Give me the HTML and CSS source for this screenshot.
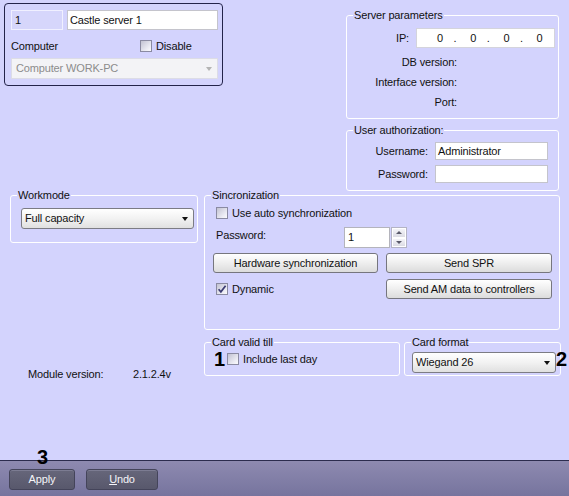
FILE: index.html
```html
<!DOCTYPE html>
<html>
<head>
<meta charset="utf-8">
<link rel="stylesheet" href="styles.css">
</head>
<body>
<div class="main">
  <div class="top">
    <div class="server-box">
      <div class="sb-row1">
        <div class="input id-input">1</div>
        <div class="input name-input">Castle server 1</div>
      </div>
      <div class="sb-row2">
        <span class="comp-label">Computer</span>
        <span class="cb"></span>
        <span class="cb-text">Disable</span>
      </div>
      <div class="select disabled comp-select">
        <span>Computer WORK-PC</span>
        <span class="arrow"></span>
      </div>
    </div>
    <div class="right-col">
      <div class="group grp-server">
        <span class="legend">Server parameters</span>
        <div class="ip-row">
          <span class="lbl">IP:</span>
          <div class="input ip-input">
            <span>0</span><span>.</span><span>0</span><span>.</span><span>0</span><span>.</span><span>0</span>
          </div>
        </div>
        <div class="info-rows">
          <div class="info-row">DB version:</div>
          <div class="info-row">Interface version:</div>
          <div class="info-row">Port:</div>
        </div>
      </div>
      <div class="group grp-auth">
        <span class="legend">User authorization:</span>
        <div class="auth-row">
          <span class="lbl">Username:</span>
          <div class="input auth-input">Administrator</div>
        </div>
        <div class="auth-row">
          <span class="lbl">Password:</span>
          <div class="input auth-input"></div>
        </div>
      </div>
    </div>
  </div>

  <div class="middle">
    <div class="group grp-workmode">
      <span class="legend">Workmode</span>
      <div class="select wm-select">
        <span>Full capacity</span>
        <span class="arrow"></span>
      </div>
    </div>
    <div class="group grp-sync">
      <span class="legend">Sincronization</span>
      <div class="sync-row1">
        <span class="cb"></span>
        <span class="cb-text">Use auto synchronization</span>
      </div>
      <div class="sync-row2">
        <span class="pw-label">Password:</span>
        <div class="input spin-input">1</div>
        <div class="spin">
          <span class="spin-btn"><span class="up"></span></span>
          <span class="spin-btn"><span class="down"></span></span>
        </div>
      </div>
      <div class="sync-row3">
        <div class="btn btn-hw">Hardware synchronization</div>
        <div class="btn btn-spr">Send SPR</div>
      </div>
      <div class="sync-row4">
        <div class="dyn-cell">
          <span class="cb checked"><svg width="10" height="10" viewBox="0 0 10 10"><path d="M1.6 5.2 L3.9 7.8 L8.6 1.8" fill="none" stroke="#3b3b73" stroke-width="1.7"/></svg></span>
          <span class="cb-text">Dynamic</span>
        </div>
        <div class="btn btn-spr">Send AM data to controllers</div>
      </div>
    </div>
  </div>

  <div class="bottom-row">
    <div class="modver">
      <span class="mv-label">Module version:</span><span>2.1.2.4v</span>
    </div>
    <div class="group grp-valid">
      <span class="legend">Card valid till</span>
      <div class="valid-row">
        <span class="mark mark-inline">1</span>
        <span class="cb"></span>
        <span class="cb-text">Include last day</span>
      </div>
    </div>
    <div class="group grp-format">
      <span class="legend">Card format</span>
      <div class="select fmt-select">
        <span>Wiegand 26</span>
        <span class="arrow"></span>
      </div>
      <span class="mark mark-2">2</span>
    </div>
  </div>
</div>
<div class="footer">
  <span class="mark mark-3">3</span>
  <div class="fbtn fbtn-apply">Apply</div>
  <div class="fbtn fbtn-undo"><u>U</u>ndo</div>
</div>
</body>
</html>
```
FILE: styles.css
```css
* { box-sizing: border-box; }
html, body {
  margin: 0;
  padding: 0;
  width: 569px;
  height: 496px;
  overflow: hidden;
}
body {
  background: #d3d3fd;
  font-family: "Liberation Sans", Arial, sans-serif;
  font-size: 11px;
  line-height: 13px;
  letter-spacing: -0.15px;
  color: #111;
}
.main {
  height: 460px;
  padding-top: 3px;
}
.top {
  display: flex;
  align-items: flex-start;
}
.server-box {
  margin-left: 4px;
  width: 219px;
  height: 83px;
  border: 1px solid #23234a;
  border-radius: 4px;
  padding: 6px 0 0 6px;
}
.input {
  background: #fff;
  border: 1px solid #c4c4cc;
  height: 20px;
  line-height: 18px;
  padding-left: 2px;
  white-space: nowrap;
}
.sb-row1 {
  display: flex;
}
.id-input {
  width: 52px;
  background: #d6d6fb;
  border: 1px solid #f0f0ff;
  padding-left: 3px;
}
.name-input {
  width: 151px;
  margin-left: 4px;
}
.sb-row2 {
  margin-top: 9px;
  height: 14px;
  display: flex;
  align-items: center;
}
.comp-label {
  width: 129px;
}
.cb {
  width: 12px;
  height: 12px;
  flex: none;
  border: 1px solid #8a8aa2;
  background: linear-gradient(135deg, #c2c2d2 0%, #ececf4 70%, #fafafc 100%);
  display: inline-flex;
  align-items: center;
  justify-content: center;
}
.cb-text {
  margin-left: 4px;
}
.select {
  display: flex;
  align-items: center;
  justify-content: space-between;
  height: 21px;
  border: 1px solid #7c7c84;
  border-radius: 3px;
  background: linear-gradient(#ffffff 0%, #f2f2f2 50%, #e0e0e0 100%);
  padding: 0 5px 0 3px;
}
.arrow {
  width: 0;
  height: 0;
  border-left: 3.5px solid transparent;
  border-right: 3.5px solid transparent;
  border-top: 4px solid #111;
}
.select.disabled {
  background: #f3f3f6;
  border: 1px solid #dcdce6;
  border-radius: 0;
  color: #8c8c8c;
  padding-left: 4px;
}
.select.disabled .arrow {
  border-top-color: #b4b4b4;
}
.comp-select {
  margin-top: 5px;
  width: 207px;
}
.right-col {
  margin-left: 123px;
  width: 213px;
}
.group {
  position: relative;
  border: 1px solid #fff;
  border-radius: 3px;
}
.legend {
  position: absolute;
  top: -7px;
  left: 6px;
  padding: 0 1px;
  background: #d3d3fd;
  white-space: nowrap;
}
.grp-server {
  margin-top: 12px;
  height: 104px;
}
.ip-row {
  display: flex;
  justify-content: flex-end;
  align-items: center;
  padding: 12px 3px 0 0;
}
.lbl {
  margin-right: 7px;
}
.ip-input {
  width: 139px;
  display: grid;
  grid-template-columns: repeat(7, 16.6px);
  padding-left: 20px;
  border-color: #d4d4dc;
}
.info-rows {
  margin-top: 4px;
}
.info-row {
  height: 20px;
  line-height: 20px;
  text-align: right;
  padding-right: 101px;
}
.grp-auth {
  margin-top: 11px;
  height: 61px;
  padding-top: 11px;
}
.auth-row {
  display: flex;
  justify-content: flex-end;
  align-items: center;
  padding-right: 10px;
}
.auth-row + .auth-row {
  margin-top: 5px;
}
.auth-input {
  width: 113px;
  height: 18px;
  line-height: 16px;
}
.middle {
  display: flex;
  margin-top: 4px;
}
.grp-workmode {
  margin-left: 10px;
  width: 188px;
  height: 48px;
  padding: 12px 0 0 10px;
}
.wm-select {
  width: 173px;
}
.grp-sync {
  margin-left: 6px;
  width: 356px;
  height: 135px;
  padding: 11px 0 0 8px;
}
.sync-row1 {
  display: flex;
  align-items: center;
  height: 12px;
  padding-left: 3px;
}
.sync-row2 {
  margin-top: 8px;
  display: flex;
  align-items: center;
  height: 21px;
}
.pw-label {
  width: 131px;
  padding-left: 3px;
  align-self: flex-start;
  margin-top: 2px;
}
.spin-input {
  width: 46px;
  height: 21px;
  line-height: 19px;
  padding-left: 3px;
  border-color: #b4b4bc;
}
.spin {
  margin-left: 1px;
  width: 16px;
  height: 21px;
  display: flex;
  flex-direction: column;
  border: 1px solid #b4b4c4;
}
.spin-btn {
  flex: 1;
  display: flex;
  align-items: center;
  justify-content: center;
  background: linear-gradient(#f4f4f8, #dcdce4);
  border: 1px solid #fff;
}
.up, .down {
  width: 0;
  height: 0;
  border-left: 3px solid transparent;
  border-right: 3px solid transparent;
}
.up { border-bottom: 3px solid #5a5a6a; }
.down { border-top: 3px solid #5a5a6a; }
.sync-row3 {
  margin-top: 5px;
  display: flex;
}
.btn {
  height: 20px;
  line-height: 18px;
  text-align: center;
  border: 1px solid #76767e;
  border-radius: 3px;
  background: linear-gradient(#ffffff 0%, #f0f0f0 45%, #dcdcdc 100%);
  white-space: nowrap;
}
.btn-hw {
  width: 165px;
}
.btn-spr {
  width: 166px;
  margin-left: 8px;
}
.sync-row4 {
  margin-top: 6px;
  display: flex;
  align-items: center;
}
.dyn-cell {
  width: 165px;
  padding-left: 3px;
  display: flex;
  align-items: center;
}
.bottom-row {
  display: flex;
  margin-top: 12px;
}
.modver {
  width: 204px;
  padding: 26px 0 0 28px;
}
.mv-label {
  display: inline-block;
  width: 105px;
}
.grp-valid {
  width: 196px;
  height: 34px;
}
.valid-row {
  display: flex;
  align-items: center;
  height: 20px;
  margin-top: 6px;
  padding-left: 9px;
}
.mark {
  font-size: 20px;
  line-height: 20px;
  font-weight: bold;
  letter-spacing: 0;
  color: #000;
}
.mark-inline {
  width: 13px;
}
.grp-format {
  margin-left: 4px;
  width: 157px;
  height: 34px;
  padding: 9px 0 0 7px;
}
.fmt-select {
  width: 144px;
}
.mark-2 {
  position: absolute;
  left: 151px;
  top: 6px;
}
.footer {
  position: relative;
  height: 36px;
  border-top: 1px solid #2c2c4e;
  background: linear-gradient(#8e8ab0, #76749e);
  display: flex;
  padding-top: 8px;
}
.mark-3 {
  position: absolute;
  left: 37px;
  top: -14px;
}
.fbtn {
  height: 21px;
  line-height: 19px;
  text-align: center;
  color: #f4f4f8;
  background: linear-gradient(#66667a, #58586c);
  border: 1px solid #44445a;
  border-radius: 3px;
  box-shadow: inset 0 1px 0 #7c7c92;
}
.fbtn-apply {
  margin-left: 9px;
  width: 66px;
}
.fbtn-undo {
  margin-left: 11px;
  width: 72px;
}
```
